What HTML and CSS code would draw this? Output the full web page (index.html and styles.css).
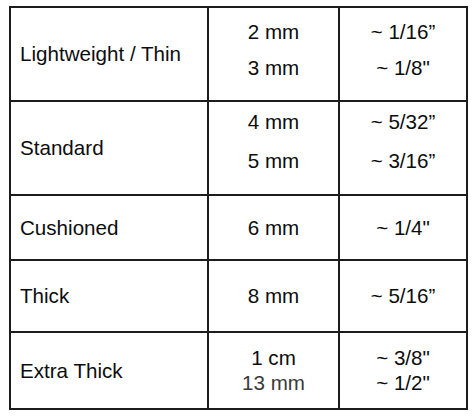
FILE: index.html
```html
<!DOCTYPE html>
<html>
<head>
<meta charset="utf-8">
<link rel="stylesheet" href="styles.css">
</head>
<body>
<div class="table">
  <div class="cell name r1">Lightweight / Thin</div>
  <div class="cell val r1 two-a"><div>2 mm</div><div>3 mm</div></div>
  <div class="cell val r1 two-a"><div>~ 1/16”</div><div>~ 1/8"</div></div>

  <div class="cell name r2">Standard</div>
  <div class="cell val r2 two-b"><div>4 mm</div><div>5 mm</div></div>
  <div class="cell val r2 two-b"><div>~ 5/32”</div><div>~ 3/16”</div></div>

  <div class="cell name r3">Cushioned</div>
  <div class="cell val r3">6 mm</div>
  <div class="cell val r3">~ 1/4"</div>

  <div class="cell name r4">Thick</div>
  <div class="cell val r4">8 mm</div>
  <div class="cell val r4">~ 5/16”</div>

  <div class="cell name r5">Extra Thick</div>
  <div class="cell val r5 two-c"><div>1 cm</div><div class="muted">13 mm</div></div>
  <div class="cell val r5 two-c"><div>~ 3/8"</div><div>~ 1/2"</div></div>
</div>
</body>
</html>
```

FILE: styles.css
```css
html, body {
  margin: 0;
  padding: 0;
  background: #ffffff;
}

body {
  font-family: "Liberation Sans", Arial, sans-serif;
  font-size: 20.6px;
  color: #0d0d0d;
}

.table {
  margin: 6px 0 0 9px;
  width: 459px;
  box-sizing: border-box;
  display: grid;
  grid-template-columns: 198px 131px 128px;
  grid-template-rows: 94px 94px 65px 72px 77px;
  border-top: 2px solid #1c1c1c;
  border-left: 2px solid #1c1c1c;
}

.cell {
  box-sizing: border-box;
  border-right: 2px solid #1c1c1c;
  border-bottom: 2px solid #1c1c1c;
  display: flex;
  flex-direction: column;
  justify-content: center;
}

.name {
  align-items: flex-start;
  padding-left: 9px;
  line-height: 24px;
}

.val {
  align-items: center;
  line-height: 24px;
}

.two-a {
  line-height: 35.5px;
  padding-bottom: 9px;
}

.two-b {
  line-height: 39px;
  padding-bottom: 14px;
}

.two-c {
  line-height: 24.7px;
}

.muted {
  color: #3a3a3a;
}
```
